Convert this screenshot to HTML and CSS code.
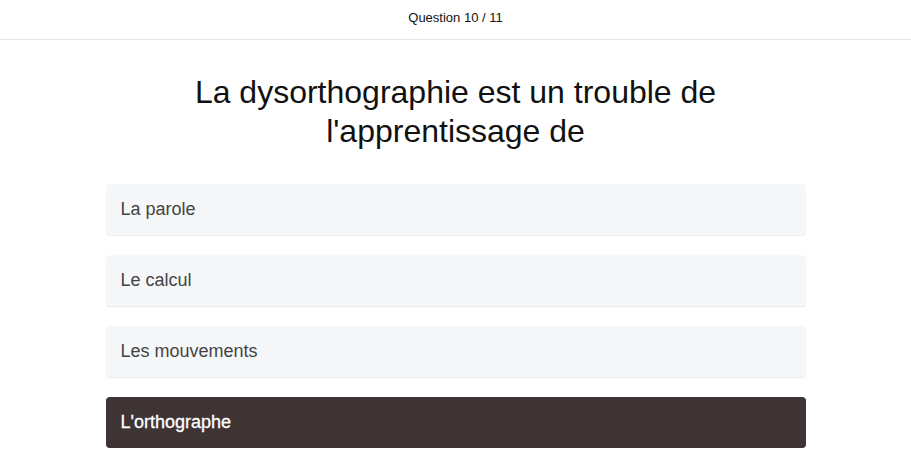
FILE: index.html
```html
<!DOCTYPE html>
<html lang="fr">
<head>
<meta charset="utf-8">
<title>Quiz</title>
<link rel="stylesheet" href="styles.css">
</head>
<body>
<header class="topbar">Question 10 / 11</header>
<main class="quiz">
  <h1 class="question">La dysorthographie est un trouble de l'apprentissage de</h1>
  <div class="options">
    <div class="option">La parole</div>
    <div class="option">Le calcul</div>
    <div class="option">Les mouvements</div>
    <div class="option selected">L'orthographe</div>
  </div>
</main>
</body>
</html>
```
FILE: styles.css
```css
* { box-sizing: border-box; }
html, body { margin: 0; padding: 0; background: #fff; }
body { font-family: "Liberation Sans", Arial, sans-serif; color: #111; }
.topbar {
  height: 40px;
  display: flex;
  align-items: center;
  justify-content: center;
  padding-bottom: 4px;
  font-size: 13px;
  color: #111;
  border-bottom: 1px solid #e6e6e6;
}
.quiz {
  width: 700px;
  margin: 0 auto;
  padding-top: 33px;
}
.question {
  margin: 0 0 33px;
  font-weight: normal;
  font-size: 32px;
  line-height: 39px;
  text-align: center;
  color: #111;
}
.options { display: flex; flex-direction: column; gap: 20px; }
.option {
  background: #f6f7f8;
  border-radius: 4px;
  box-shadow: 0 1px 1px rgba(0,0,0,0.09);
  padding: 14px 15px 15px;
  font-size: 18px;
  line-height: 22px;
  color: #444;
}
.option.selected {
  background: #3f3434;
  color: #fff;
  font-weight: normal;
  -webkit-text-stroke: 0.3px #fff;
}
```
